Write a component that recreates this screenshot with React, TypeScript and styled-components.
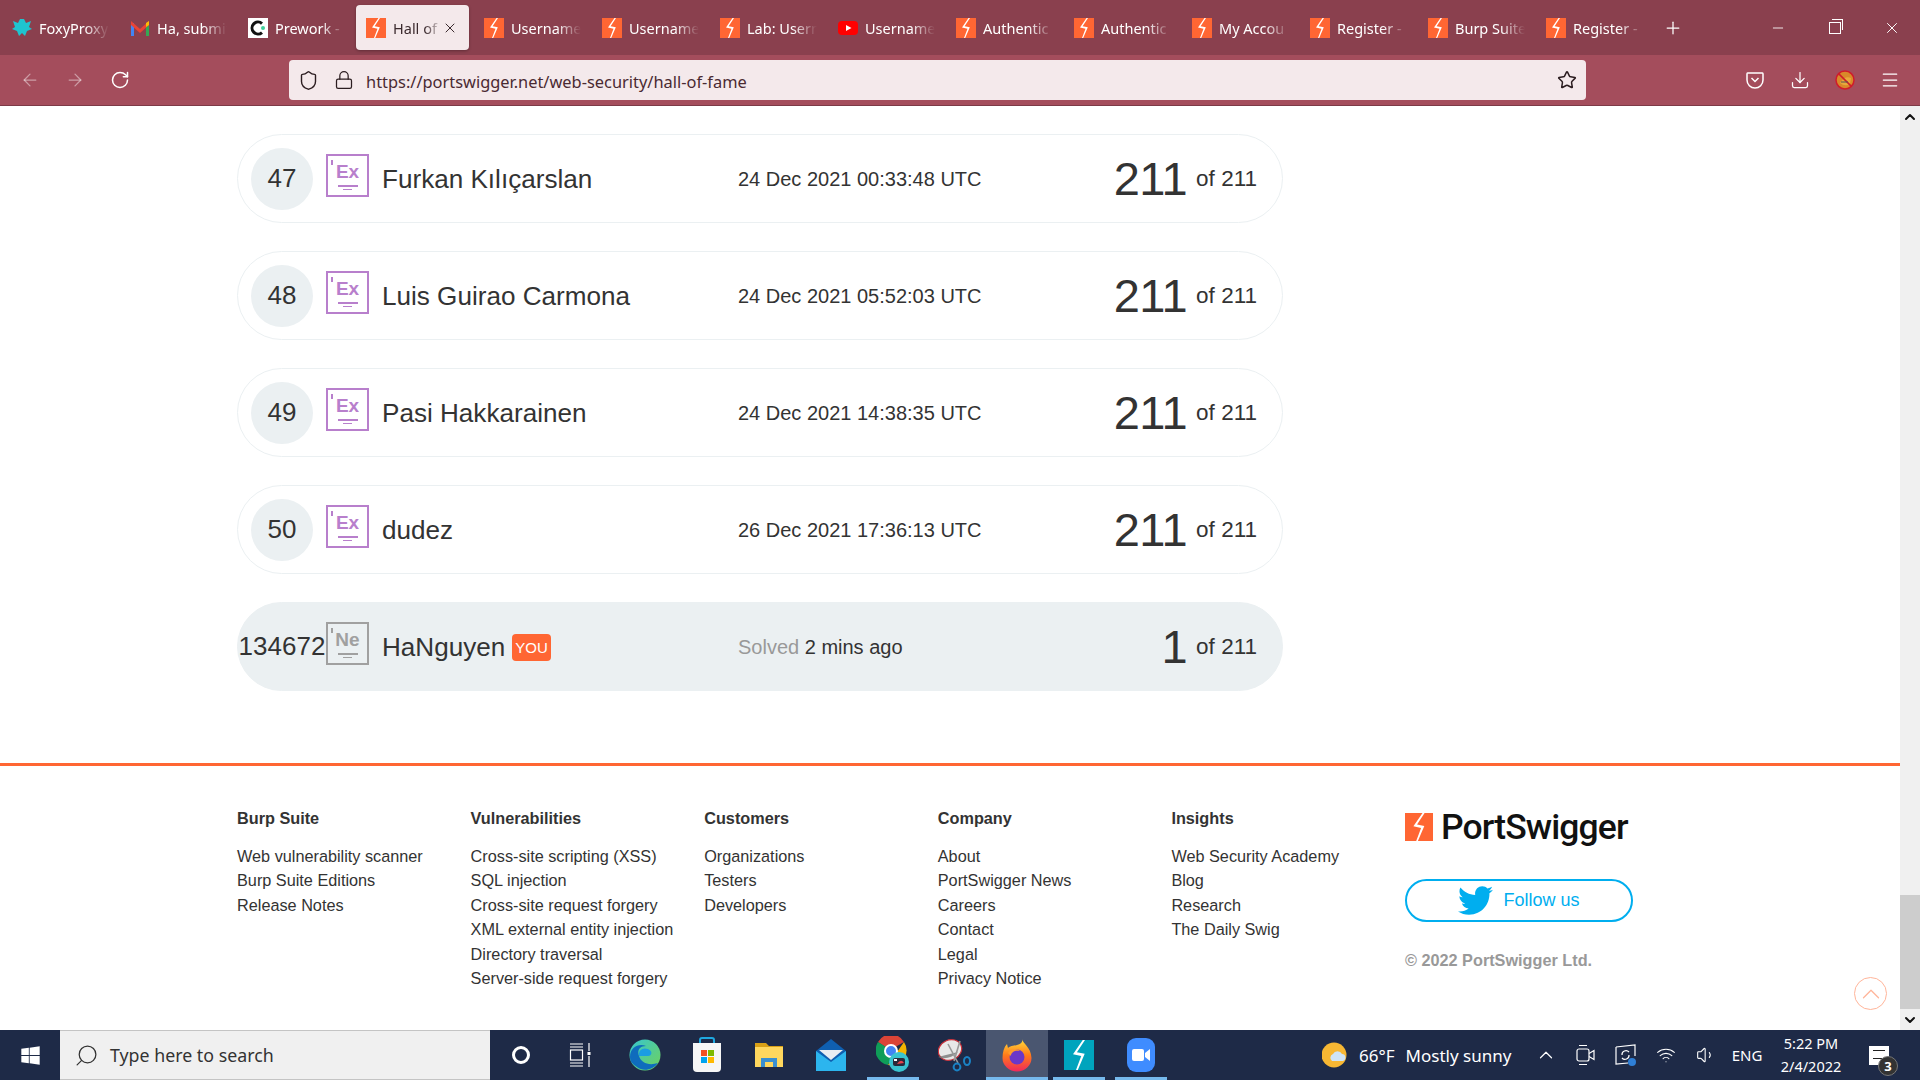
import React from 'react';
import styled, { createGlobalStyle } from 'styled-components';
import {
  ArrowLeft,
  ArrowRight,
  RotateCw,
  Shield,
  Lock,
  Star,
  Download,
  Menu,
  X,
  Plus,
  Minus,
  ChevronUp,
  ChevronDown,
  Wifi,
  Volume1,
  Search,
} from 'lucide-react';
import { FaTwitter, FaWindows } from 'react-icons/fa';

const GlobalStyle = createGlobalStyle`
  html, body {
    margin: 0;
    padding: 0;
    width: 1920px;
    height: 1080px;
    overflow: hidden;
    background: #fff;
  }
  * { box-sizing: border-box; }
`;

const UI_FONT = `"Noto Sans", "Open Sans", sans-serif`;
const WEB_FONT = `"Liberation Sans", Arial, sans-serif`;

interface TabData {
  title: string;
  icon: 'fox' | 'gmail' | 'prework' | 'burp' | 'youtube';
  active?: boolean;
}

const tabs: TabData[] = [
  { title: 'FoxyProxy', icon: 'fox' },
  { title: 'Ha, submit', icon: 'gmail' },
  { title: 'Prework -', icon: 'prework' },
  { title: 'Hall of', icon: 'burp', active: true },
  { title: 'Username', icon: 'burp' },
  { title: 'Username', icon: 'burp' },
  { title: 'Lab: Usern', icon: 'burp' },
  { title: 'Username', icon: 'youtube' },
  { title: 'Authentic', icon: 'burp' },
  { title: 'Authentic', icon: 'burp' },
  { title: 'My Accou', icon: 'burp' },
  { title: 'Register -', icon: 'burp' },
  { title: 'Burp Suite', icon: 'burp' },
  { title: 'Register -', icon: 'burp' },
];

const leaders = [
  { rank: 47, name: 'Furkan Kılıçarslan', date: '24 Dec 2021 00:33:48 UTC' },
  { rank: 48, name: 'Luis Guirao Carmona', date: '24 Dec 2021 05:52:03 UTC' },
  { rank: 49, name: 'Pasi Hakkarainen', date: '24 Dec 2021 14:38:35 UTC' },
  { rank: 50, name: 'dudez', date: '26 Dec 2021 17:36:13 UTC' },
];

const footerColumns = [
  { title: 'Burp Suite', links: ['Web vulnerability scanner', 'Burp Suite Editions', 'Release Notes'] },
  {
    title: 'Vulnerabilities',
    links: [
      'Cross-site scripting (XSS)',
      'SQL injection',
      'Cross-site request forgery',
      'XML external entity injection',
      'Directory traversal',
      'Server-side request forgery',
    ],
  },
  { title: 'Customers', links: ['Organizations', 'Testers', 'Developers'] },
  { title: 'Company', links: ['About', 'PortSwigger News', 'Careers', 'Contact', 'Legal', 'Privacy Notice'] },
  { title: 'Insights', links: ['Web Security Academy', 'Blog', 'Research', 'The Daily Swig'] },
];

const BurpMark: React.FC<{ size: number; bg?: string }> = ({ size, bg = '#ff6633' }) => (
  <svg width={size} height={size} viewBox="0 0 20 20">
    <rect width="20" height="20" fill={bg} />
    <path d="M12.5 0 L6 9.5 L11.5 10.7 L8 20 L9.2 20 L13.8 9.2 L8.6 8.2 L14 0 Z" fill="#fff" />
  </svg>
);

const TabIcon: React.FC<{ kind: TabData['icon'] }> = ({ kind }) => {
  if (kind === 'burp') return <BurpMark size={20} />;
  if (kind === 'fox')
    return (
      <svg width="20" height="20" viewBox="0 0 20 20">
        <path
          d="M1 3 L6 5 L8 1 L12 1 L14 5 L19 3 L17 9 L20 11 L15 13 L13 18 L10 15 L7 18 L5 13 L0 11 L3 9 Z"
          fill="#1fc4cf"
        />
      </svg>
    );
  if (kind === 'gmail')
    return (
      <svg width="20" height="20" viewBox="0 0 20 20">
        <path d="M1 18 V5 L4 5 V18 Z" fill="#4285f4" />
        <path d="M16 18 V5 L19 5 V18 Z" fill="#34a853" />
        <path d="M1 3 L10 11 L10 15 L1 7 Z" fill="#ea4335" />
        <path d="M19 3 L10 11 L10 15 L19 7 Z" fill="#ea4335" />
        <path d="M16 5 L19 3 V7 L16 9 Z" fill="#fbbc04" />
      </svg>
    );
  if (kind === 'prework')
    return (
      <svg width="20" height="20" viewBox="0 0 20 20">
        <rect width="20" height="20" fill="#fff" />
        <path d="M14 5.5 A6 6 0 1 0 14 14.5" fill="none" stroke="#111" strokeWidth="3" />
        <circle cx="15" cy="10" r="2" fill="#3ecf9a" />
      </svg>
    );
  return (
    <svg width="20" height="20" viewBox="0 0 20 20">
      <rect y="3" width="20" height="14" rx="4" fill="#ff0000" />
      <path d="M8 7 L13.5 10 L8 13 Z" fill="#fff" />
    </svg>
  );
};

const PocketIcon = () => (
  <svg width="20" height="20" viewBox="0 0 20 20" fill="none" stroke="#fff" strokeWidth="1.5">
    <path d="M2.5 3 H17.5 Q18 3 18 4 V10 A8 8 0 0 1 2 10 V4 Q2 3 2.5 3 Z" />
    <path d="M6.5 8 L10 11.5 L13.5 8" />
  </svg>
);

const AddonIcon = () => (
  <svg width="20" height="20" viewBox="0 0 20 20">
    <circle cx="10" cy="10" r="9" fill="#d9892a" stroke="#d01c2a" strokeWidth="1.5" />
    <path d="M5 13 Q10 5 16 8 L15 14 Q10 17 5 13 Z" fill="#e8a93c" />
    <path d="M3.6 3.6 L16.4 16.4" stroke="#d01c2a" strokeWidth="1.5" />
    <path d="M6 12 H13" stroke="#555" strokeWidth="1" />
  </svg>
);

const TaskViewIcon = () => (
  <svg width="28" height="24" viewBox="0 0 28 24" fill="none" stroke="#fff" strokeWidth="1.2">
    <path d="M1 1 H14 M1 4 H14 M1 20 H14 M1 23 H14" />
    <rect x="1.5" y="7" width="12" height="10" />
    <path d="M20 0 V8 M20 13 V24" />
    <rect x="18.5" y="9" width="3" height="3" fill="#fff" stroke="none" />
  </svg>
);

const EdgeIcon = () => (
  <svg width="32" height="32" viewBox="0 0 32 32">
    <defs>
      <linearGradient id="edgeA" x1="0" y1="0" x2="1" y2="1">
        <stop offset="0" stopColor="#37c6d0" />
        <stop offset="1" stopColor="#6fd25a" />
      </linearGradient>
    </defs>
    <circle cx="16" cy="16" r="15.5" fill="url(#edgeA)" />
    <path d="M1 18 C1 8 10 4 17 7 C10 7 8 12 10 17 C12 24 20 27 29 24 C24 31 14 33 8 28 C3 25 1 22 1 18 Z" fill="#0f6cbd" />
    <path d="M10 17 C9 11 14 8 19 10 C24 12 23 17 19 17 Z" fill="#1b9de2" />
  </svg>
);

const StoreIcon = () => (
  <svg width="30" height="36" viewBox="0 0 30 36">
    <path d="M8 8 V3 Q8 1 10 1 H20 Q22 1 22 3 V8" fill="none" stroke="#1fa8e0" strokeWidth="2" />
    <path d="M1 6 H29 V31 Q29 35 25 35 H5 Q1 35 1 31 Z" fill="#f6f6f6" />
    <rect x="9" y="13" width="6" height="6" fill="#f25022" />
    <rect x="16" y="13" width="6" height="6" fill="#7fba00" />
    <rect x="9" y="20" width="6" height="6" fill="#00a4ef" />
    <rect x="16" y="20" width="6" height="6" fill="#ffb900" />
  </svg>
);

const FolderIcon = () => (
  <svg width="30" height="30" viewBox="0 0 30 30">
    <path d="M1 3 H12 L15 6 H29 V27 H1 Z" fill="#d9a016" />
    <rect x="1" y="7" width="28" height="20" fill="#ffd75e" />
    <path d="M7 27 V18 H23 V27 H19 V22 H11 V27 Z" fill="#3a8fd0" />
  </svg>
);

const MailIcon = () => (
  <svg width="30" height="34" viewBox="0 0 30 34">
    <path d="M0 13 L15 1 L30 13 V33 H0 Z" fill="#0f5fb0" />
    <path d="M3 12 H27 L15 22 Z" fill="#e8edf2" />
    <path d="M0 13 L15 24 L30 13 V33 H0 Z" fill="#2cb5ee" />
  </svg>
);

const ChromeIcon = () => (
  <svg width="34" height="38" viewBox="0 0 34 38">
    <path d="M14 14 L2 6 A15 15 0 0 1 28 6 Z" fill="#db4437" />
    <path d="M2 6 A15 15 0 0 0 12 29 L18 16 Z" fill="#0f9d58" />
    <path d="M28 6 A15 15 0 0 1 12 29 Z" fill="#f4b400" />
    <circle cx="15" cy="15" r="6" fill="#4285f4" stroke="#fff" strokeWidth="2" />
    <circle cx="23" cy="26" r="10" fill="#39c3cf" />
    <rect x="17" y="22" width="12" height="8" rx="2" fill="#2a2a3a" />
    <path d="M21 28 Q25 22 28 27 Z" fill="#e8454b" />
    <rect x="18" y="23" width="3" height="2" fill="#fff" />
  </svg>
);

const SnipIcon = () => (
  <svg width="34" height="36" viewBox="0 0 34 36">
    <ellipse cx="12" cy="13" rx="12" ry="10" fill="#e8e8e8" stroke="#c9303a" strokeWidth="1.2" transform="rotate(-25 12 13)" />
    <path d="M0 20 Q10 24 20 15" fill="#777" opacity="0.8" />
    <path d="M10 7 L20 26 M22 4 L16 24" stroke="#999" strokeWidth="1.6" />
    <circle cx="19" cy="30" r="3.4" fill="none" stroke="#1a82c4" strokeWidth="2" />
    <ellipse cx="29" cy="24" rx="3" ry="4" fill="none" stroke="#1a82c4" strokeWidth="2" />
  </svg>
);

const FirefoxIcon = () => (
  <svg width="30" height="34" viewBox="0 0 30 34">
    <defs>
      <linearGradient id="ffA" x1="0.5" y1="0" x2="0.5" y2="1">
        <stop offset="0" stopColor="#ffdf3a" />
        <stop offset="0.5" stopColor="#ff7a1a" />
        <stop offset="1" stopColor="#f0285c" />
      </linearGradient>
    </defs>
    <path d="M20 1 C21 6 29 9 29.5 20 A14.5 13.5 0 0 1 0.5 20 C0.5 14 2 9 5 6 L6 10 C9 7 13 8 15 7 C19 6 21 4 20 1 Z" fill="url(#ffA)" />
    <circle cx="15" cy="19" r="7.5" fill="#6b37c8" />
    <path d="M6 15 C9 10 15 10 18 13 C13 12 9 14 9 18 Z" fill="#ff9a2a" />
  </svg>
);

const ZoomIcon = () => (
  <svg width="28" height="34" viewBox="0 0 28 34">
    <rect width="28" height="34" rx="9" fill="#3f8cff" />
    <rect x="5" y="11" width="12" height="12" rx="2" fill="#fff" />
    <path d="M18 15 L23 11 V23 L18 19 Z" fill="#fff" />
  </svg>
);

const WeatherIcon = () => (
  <svg width="26" height="26" viewBox="0 0 26 26">
    <circle cx="12" cy="13" r="12.5" fill="#f7b733" />
    <path d="M10 19 A4 4 0 0 1 11 12 A5 5 0 0 1 20 12 A3.6 3.6 0 0 1 21 19 Z" fill="#cfe4f7" />
  </svg>
);

const MeetIcon = () => (
  <svg width="20" height="22" viewBox="0 0 20 22" fill="none" stroke="#fff" strokeWidth="1.2">
    <path d="M3 1.5 H11 M3 20.5 H11" />
    <rect x="1" y="5" width="12" height="12" rx="2" />
    <path d="M13 9.5 L18 6.5 V15.5 L13 12.5" />
  </svg>
);

const SyncIcon = () => (
  <svg width="22" height="22" viewBox="0 0 22 22">
    <path d="M1 3 L20 1 V12 M1 3 V20 L13 19" fill="none" stroke="#fff" strokeWidth="1.2" />
    <path d="M7 11 A4 4 0 0 1 14 8 M14 11 A4 4 0 0 1 7 14" fill="none" stroke="#fff" strokeWidth="1.2" />
    <circle cx="17" cy="18" r="4" fill="#2f7fd6" />
  </svg>
);

const RootLayout = styled.div`
  width: 1920px;
  height: 1080px;
  display: flex;
  flex-direction: column;
  overflow: hidden;
  font-family: ${WEB_FONT};
  color: #333;
`;

const TabBar = styled.div`
  height: 55px;
  flex: none;
  background: #8a404e;
  display: flex;
  align-items: flex-start;
  padding: 5px 0 0 2px;
  font-family: ${UI_FONT};
`;

const Tab = styled.div<{ $active?: boolean }>`
  width: 113px;
  height: 45px;
  margin-right: 5px;
  flex: none;
  display: flex;
  align-items: center;
  padding: 0 6px 0 10px;
  gap: 7px;
  border-radius: 4px;
  background: ${(p) => (p.$active ? '#f4e9eb' : 'transparent')};
  color: ${(p) => (p.$active ? '#3b2a2e' : '#fff')};
  box-shadow: ${(p) => (p.$active ? '0 1px 3px rgba(0,0,0,0.3)' : 'none')};
  svg {
    flex: none;
  }
`;

const TabTitle = styled.span`
  flex: 1;
  min-width: 0;
  font-size: 14.5px;
  white-space: nowrap;
  overflow: hidden;
  -webkit-mask-image: linear-gradient(to right, #000 65%, transparent 100%);
  mask-image: linear-gradient(to right, #000 65%, transparent 100%);
`;

const CloseTab = styled.span`
  width: 21px;
  margin-left: -7px;
  flex: none;
  display: flex;
  align-items: center;
`;

const NewTab = styled.div`
  width: 38px;
  height: 45px;
  display: flex;
  align-items: center;
  justify-content: center;
  color: #fff;
`;

const WindowControls = styled.div`
  margin-left: auto;
  display: flex;
  height: 45px;
  align-items: center;
  color: #fff;
`;

const WindowButton = styled.div`
  width: 57px;
  display: flex;
  justify-content: center;
`;

const RestoreGlyph = styled.div`
  width: 12px;
  height: 12px;
  border: 1px solid #fff;
  position: relative;
  &::after {
    content: '';
    position: absolute;
    left: 2px;
    top: -4px;
    width: 10px;
    height: 10px;
    border-top: 1px solid #fff;
    border-right: 1px solid #fff;
  }
`;

const Toolbar = styled.div`
  height: 51px;
  flex: none;
  background: #a44d5c;
  display: grid;
  grid-template-columns: 289px 1297px 1fr;
  align-items: center;
  border-bottom: 1px solid #7d3a47;
`;

const NavGroup = styled.div`
  display: flex;
  padding-left: 7px;
`;

const NavButton = styled.div<{ $dim?: boolean }>`
  width: 45px;
  display: flex;
  justify-content: center;
  color: ${(p) => (p.$dim ? 'rgba(255,255,255,0.45)' : '#fff')};
`;

const UrlBar = styled.div`
  height: 40px;
  background: #f4e9eb;
  border-radius: 4px;
  display: flex;
  align-items: center;
  padding: 0 9px 0 2px;
  color: #2b1d20;
`;

const UrlIcon = styled.span`
  display: flex;
  width: 35px;
  flex: none;
  justify-content: center;
`;

const UrlText = styled.span`
  flex: 1;
  margin: 2px 0 0 5px;
  font-family: ${UI_FONT};
  font-size: 16.4px;
  color: #4a2a32;
`;

const ToolGroup = styled.div`
  display: flex;
  justify-content: flex-end;
  padding-right: 8px;
`;

const ToolButton = styled.div`
  width: 45px;
  display: flex;
  justify-content: center;
  color: #fff;
`;

const Viewport = styled.div`
  flex: 1;
  min-height: 0;
  display: flex;
`;

const Page = styled.div`
  flex: 1;
  min-width: 0;
  position: relative;
  overflow: hidden;
  background: #fff;
`;

const Board = styled.div`
  padding: 28px 0 0 237px;
  box-sizing: content-box;
  width: 1046px;
  display: flex;
  flex-direction: column;
  gap: 28px;
`;

const Row = styled.div<{ $self?: boolean }>`
  height: 89px;
  border-radius: 45px;
  display: grid;
  grid-template-columns: 88px 56px 356px 1fr auto;
  align-items: center;
  padding-right: 25px;
  border: 1px solid #ebf0f2;
  background: ${(p) => (p.$self ? '#ebf0f2' : '#fff')};
`;

const Rank = styled.div<{ $self?: boolean }>`
  justify-self: center;
  height: 62px;
  min-width: 62px;
  border-radius: 31px;
  display: flex;
  align-items: center;
  justify-content: center;
  font-size: 26px;
  background: ${(p) => (p.$self ? 'transparent' : '#ebf0f2')};
`;

const Tile = styled.div<{ $tone: string }>`
  width: 43px;
  height: 43px;
  margin-top: -6px;
  border: 2px solid ${(p) => p.$tone};
  color: ${(p) => p.$tone};
  position: relative;
  display: flex;
  flex-direction: column;
  align-items: center;
  padding-top: 6px;
  font-size: 19px;
  line-height: 20px;
  font-weight: 700;
`;

const TileTick = styled.span`
  position: absolute;
  left: 3px;
  top: 4px;
  width: 1.5px;
  height: 5px;
  background: currentColor;
`;

const TileRule = styled.span<{ $short?: boolean }>`
  display: block;
  height: 1.5px;
  width: ${(p) => (p.$short ? 9 : 20)}px;
  margin-top: ${(p) => (p.$short ? 2 : 3)}px;
  background: currentColor;
`;

const Name = styled.div`
  font-size: 26.1px;
  padding-top: 2px;
  display: flex;
  align-items: center;
  gap: 7px;
`;

const YouBadge = styled.span`
  background: #ff6633;
  color: #fff;
  font-size: 15px;
  height: 27px;
  line-height: 27px;
  padding: 0 3px;
  border-radius: 4px;
`;

const DateText = styled.div`
  font-size: 20px;
  padding-top: 1px;
`;

const Muted = styled.span`
  color: #999;
`;

const Score = styled.div`
  display: flex;
  align-items: center;
  justify-content: flex-end;
  gap: 9px;
  font-size: 22.5px;
`;

const ScoreValue = styled.span`
  font-size: 47px;
  line-height: 50px;
  letter-spacing: -0.5px;
`;

const Footer = styled.footer`
  margin-top: 72px;
  border-top: 3px solid #ff6633;
  padding: 42px 0 0 237px;
  display: grid;
  grid-template-columns: repeat(5, 233.6px) auto;
  font-size: 16.25px;
`;

const FooterHeading = styled.div`
  font-weight: 700;
  line-height: 20px;
  margin-bottom: 16px;
`;

const FooterLink = styled.div`
  line-height: 24.4px;
`;

const BrandColumn = styled.div`
  display: flex;
  flex-direction: column;
  align-items: flex-start;
`;

const Logo = styled.div`
  display: flex;
  align-items: center;
  gap: 8px;
  height: 36px;
  margin: 1px 0 34px;
`;

const LogoText = styled.span`
  font-family: Roboto, sans-serif;
  font-weight: 500;
  font-size: 35.5px;
  letter-spacing: -0.9px;
  color: #111;
  line-height: 36px;
`;

const FollowButton = styled.div`
  width: 228px;
  height: 43px;
  border: 2px solid #00aeef;
  border-radius: 22px;
  display: flex;
  align-items: center;
  justify-content: center;
  gap: 10px;
  color: #00aeef;
  font-size: 18px;
`;

const Copyright = styled.div`
  margin-top: 28px;
  font-weight: 700;
  color: #999;
  line-height: 20px;
`;

const BackToTop = styled.div`
  position: absolute;
  left: 1854px;
  top: 871px;
  width: 33px;
  height: 33px;
  border: 1.5px solid #ffb59a;
  border-radius: 50%;
  display: flex;
  align-items: center;
  justify-content: center;
  color: #ffb59a;
`;

const Scrollbar = styled.div`
  width: 20px;
  flex: none;
  background: #f0f0f0;
  display: flex;
  flex-direction: column;
`;

const ScrollArrow = styled.div`
  height: 21px;
  flex: none;
  display: flex;
  align-items: center;
  justify-content: center;
  color: #111;
`;

const ScrollTrack = styled.div`
  flex: 1;
  display: flex;
  flex-direction: column;
  justify-content: flex-end;
`;

const ScrollThumb = styled.div`
  height: 114px;
  background: #cdcdcd;
`;

const Taskbar = styled.div`
  height: 50px;
  flex: none;
  background: #1e2a47;
  display: flex;
  align-items: stretch;
  color: #fff;
  font-family: ${UI_FONT};
`;

const StartButton = styled.div`
  width: 60px;
  flex: none;
  display: flex;
  align-items: center;
  justify-content: center;
`;

const SearchBox = styled.div`
  width: 430px;
  flex: none;
  background: #f0f0f0;
  border-top: 1px solid #c4c4c4;
  border-bottom: 1px solid #c4c4c4;
  display: flex;
  align-items: center;
  gap: 11px;
  padding-left: 14px;
  color: #333;
  font-size: 17.8px;
  svg {
    transform: scaleX(-1);
  }
`;

const TaskSlot = styled.div<{ $open?: boolean; $current?: boolean }>`
  width: 62px;
  flex: none;
  display: flex;
  align-items: center;
  justify-content: center;
  position: relative;
  background: ${(p) => (p.$current ? '#4a5670' : 'transparent')};
  &::after {
    content: '';
    display: ${(p) => (p.$open ? 'block' : 'none')};
    position: absolute;
    left: ${(p) => (p.$current ? 0 : 5)}px;
    right: ${(p) => (p.$current ? 0 : 5)}px;
    bottom: 0;
    height: 3px;
    background: #76b9ed;
  }
`;

const CortanaRing = styled.div`
  width: 18px;
  height: 18px;
  border: 3px solid #fff;
  border-radius: 50%;
`;

const Tray = styled.div`
  margin-left: auto;
  display: flex;
  align-items: center;
  font-size: 17px;
`;

const TrayWeather = styled.div`
  display: flex;
  align-items: center;
  gap: 11px;
  width: 204px;
`;

const TrayIcon = styled.div`
  width: 40px;
  display: flex;
  justify-content: center;
`;

const TrayLang = styled.div`
  width: 42px;
  margin-right: 10px;
  font-size: 15px;
  text-align: center;
`;

const Clock = styled.div`
  width: 66px;
  text-align: center;
  font-size: 14.5px;
  line-height: 23px;
  white-space: nowrap;
`;

const Notifications = styled.div`
  width: 76px;
  display: flex;
  justify-content: center;
  padding-right: 6px;
  position: relative;
`;

const NoteSheet = styled.div`
  width: 20px;
  height: 19px;
  background: #fff;
  padding: 4px 4px;
  &::before {
    content: '';
    display: block;
    height: 7px;
    border-top: 1px solid #222;
    border-bottom: 1px solid #222;
  }
`;

const NoteCount = styled.span`
  position: absolute;
  left: 34px;
  top: 10px;
  width: 20px;
  height: 20px;
  border-radius: 50%;
  background: #333;
  border: 1px solid #777;
  font-size: 13px;
  font-weight: 700;
  line-height: 18px;
  text-align: center;
`;

const ElementTile: React.FC<{ symbol: string; tone: string }> = ({ symbol, tone }) => (
  <Tile $tone={tone}>
    <TileTick />
    {symbol}
    <TileRule />
    <TileRule $short />
  </Tile>
);

const App: React.FC = () => {
  return (
    <RootLayout>
      <GlobalStyle />
      <TabBar>
        {tabs.map((tab, i) => (
          <Tab key={i} $active={tab.active}>
            <TabIcon kind={tab.icon} />
            <TabTitle>{tab.title}</TabTitle>
            {tab.active && (
              <CloseTab>
                <X size={16} strokeWidth={1.5} />
              </CloseTab>
            )}
          </Tab>
        ))}
        <NewTab>
          <Plus size={20} strokeWidth={1.5} />
        </NewTab>
        <WindowControls>
          <WindowButton>
            <Minus size={16} strokeWidth={1.3} />
          </WindowButton>
          <WindowButton>
            <RestoreGlyph />
          </WindowButton>
          <WindowButton>
            <X size={18} strokeWidth={1.3} />
          </WindowButton>
        </WindowControls>
      </TabBar>

      <Toolbar>
        <NavGroup>
          <NavButton $dim>
            <ArrowLeft size={20} strokeWidth={1.5} />
          </NavButton>
          <NavButton $dim>
            <ArrowRight size={20} strokeWidth={1.5} />
          </NavButton>
          <NavButton>
            <RotateCw size={20} strokeWidth={1.8} />
          </NavButton>
        </NavGroup>
        <UrlBar>
          <UrlIcon>
            <Shield size={21} strokeWidth={1.6} />
          </UrlIcon>
          <UrlIcon>
            <Lock size={20} strokeWidth={1.5} />
          </UrlIcon>
          <UrlText>https://portswigger.net/web-security/hall-of-fame</UrlText>
          <Star size={20} strokeWidth={1.8} />
        </UrlBar>
        <ToolGroup>
          <ToolButton>
            <PocketIcon />
          </ToolButton>
          <ToolButton>
            <Download size={20} strokeWidth={1.5} />
          </ToolButton>
          <ToolButton>
            <AddonIcon />
          </ToolButton>
          <ToolButton>
            <Menu size={20} strokeWidth={1.5} />
          </ToolButton>
        </ToolGroup>
      </Toolbar>

      <Viewport>
        <Page>
          <Board>
            {leaders.map((l) => (
              <Row key={l.rank}>
                <Rank>{l.rank}</Rank>
                <ElementTile symbol="Ex" tone="#b87fcc" />
                <Name>{l.name}</Name>
                <DateText>{l.date}</DateText>
                <Score>
                  <ScoreValue>211</ScoreValue> of 211
                </Score>
              </Row>
            ))}
            <Row $self>
              <Rank $self>134672</Rank>
              <ElementTile symbol="Ne" tone="#a0a0a0" />
              <Name>
                HaNguyen <YouBadge>YOU</YouBadge>
              </Name>
              <DateText>
                <Muted>Solved</Muted> 2 mins ago
              </DateText>
              <Score>
                <ScoreValue>1</ScoreValue> of 211
              </Score>
            </Row>
          </Board>

          <Footer>
            {footerColumns.map((col) => (
              <div key={col.title}>
                <FooterHeading>{col.title}</FooterHeading>
                {col.links.map((link) => (
                  <FooterLink key={link}>{link}</FooterLink>
                ))}
              </div>
            ))}
            <BrandColumn>
              <Logo>
                <BurpMark size={28} />
                <LogoText>PortSwigger</LogoText>
              </Logo>
              <FollowButton>
                <FaTwitter size={35} />
                Follow us
              </FollowButton>
              <Copyright>© 2022 PortSwigger Ltd.</Copyright>
            </BrandColumn>
          </Footer>

          <BackToTop>
            <ChevronUp size={30} strokeWidth={1} />
          </BackToTop>
        </Page>
        <Scrollbar>
          <ScrollArrow>
            <ChevronUp size={16} strokeWidth={3} />
          </ScrollArrow>
          <ScrollTrack>
            <ScrollThumb />
          </ScrollTrack>
          <ScrollArrow>
            <ChevronDown size={16} strokeWidth={3} />
          </ScrollArrow>
        </Scrollbar>
      </Viewport>

      <Taskbar>
        <StartButton>
          <FaWindows size={21} />
        </StartButton>
        <SearchBox>
          <Search size={25} strokeWidth={1.2} />
          Type here to search
        </SearchBox>
        <TaskSlot>
          <CortanaRing />
        </TaskSlot>
        <TaskSlot>
          <TaskViewIcon />
        </TaskSlot>
        <TaskSlot>
          <EdgeIcon />
        </TaskSlot>
        <TaskSlot>
          <StoreIcon />
        </TaskSlot>
        <TaskSlot>
          <FolderIcon />
        </TaskSlot>
        <TaskSlot>
          <MailIcon />
        </TaskSlot>
        <TaskSlot $open>
          <ChromeIcon />
        </TaskSlot>
        <TaskSlot>
          <SnipIcon />
        </TaskSlot>
        <TaskSlot $open $current>
          <FirefoxIcon />
        </TaskSlot>
        <TaskSlot $open>
          <BurpMark size={30} bg="#00a4bd" />
        </TaskSlot>
        <TaskSlot $open>
          <ZoomIcon />
        </TaskSlot>
        <Tray>
          <TrayWeather>
            <WeatherIcon />
            <span>66°F</span>
            <span>Mostly sunny</span>
          </TrayWeather>
          <TrayIcon>
            <ChevronUp size={22} strokeWidth={1.3} />
          </TrayIcon>
          <TrayIcon>
            <MeetIcon />
          </TrayIcon>
          <TrayIcon>
            <SyncIcon />
          </TrayIcon>
          <TrayIcon>
            <Wifi size={20} strokeWidth={1.3} />
          </TrayIcon>
          <TrayIcon>
            <Volume1 size={20} strokeWidth={1.3} />
          </TrayIcon>
          <TrayLang>ENG</TrayLang>
          <Clock>
            <div>5:22 PM</div>
            <div>2/4/2022</div>
          </Clock>
          <Notifications>
            <NoteSheet />
            <NoteCount>3</NoteCount>
          </Notifications>
        </Tray>
      </Taskbar>
    </RootLayout>
  );
};

export default App;
